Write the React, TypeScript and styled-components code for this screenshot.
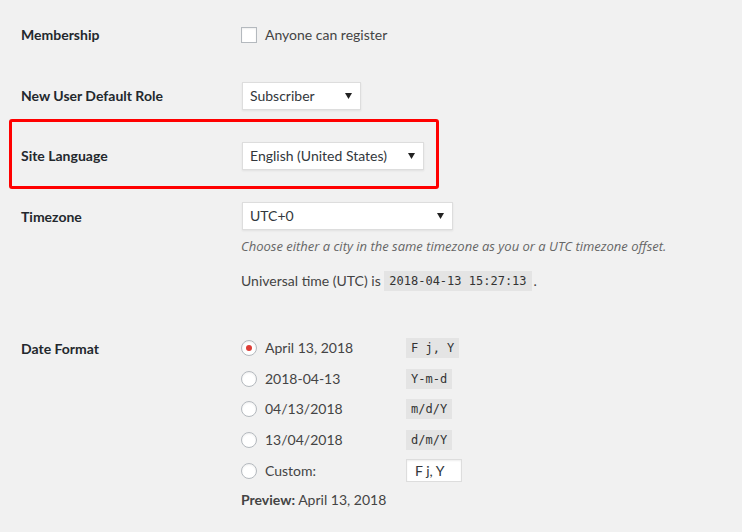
import styled, { createGlobalStyle } from 'styled-components';

const GlobalStyle = createGlobalStyle`
  body {
    margin: 0;
    background: #f1f1f1;
    font-family: "Lato", "Open Sans", sans-serif;
    font-size: 14px;
    color: #444;
  }
`;

const dateOptions = [
  { label: 'April 13, 2018', code: 'F j, Y', checked: true },
  { label: '2018-04-13', code: 'Y-m-d' },
  { label: '04/13/2018', code: 'm/d/Y' },
  { label: '13/04/2018', code: 'd/m/Y' },
];

const Caret = () => (
  <svg width="7" height="6" viewBox="0 0 7 6">
    <path d="M0 0h7L3.5 6z" fill="#222" />
  </svg>
);

const App = () => {
  return (
    <>
      <GlobalStyle />
      <Styled.Page>
        <Styled.Row $h={62}>
          <Styled.Label>Membership</Styled.Label>
          <Styled.Field>
            <Styled.Check>
              <Styled.Box />
              Anyone can register
            </Styled.Check>
          </Styled.Field>
        </Styled.Row>

        <Styled.Row $h={60}>
          <Styled.Label>New User Default Role</Styled.Label>
          <Styled.Field>
            <Styled.Select $w={119}>
              Subscriber
              <Caret />
            </Styled.Select>
          </Styled.Field>
        </Styled.Row>

        <Styled.Row $h={60}>
          <Styled.Highlight />
          <Styled.Label>Site Language</Styled.Label>
          <Styled.Field>
            <Styled.Select $w={182}>
              English (United States)
              <Caret />
            </Styled.Select>
          </Styled.Field>
        </Styled.Row>

        <Styled.TopRow>
          <Styled.Label $top={21}>Timezone</Styled.Label>
          <Styled.Field $top={16}>
            <Styled.Select $w={211}>
              UTC+0
              <Caret />
            </Styled.Select>
            <Styled.Description>
              Choose either a city in the same timezone as you or a UTC timezone offset.
            </Styled.Description>
            <Styled.TimeLine>
              Universal time (UTC) is <Styled.Code>2018-04-13 15:27:13</Styled.Code>.
            </Styled.TimeLine>
          </Styled.Field>
        </Styled.TopRow>

        <Styled.TopRow $gap={42}>
          <Styled.Label $top={6}>Date Format</Styled.Label>
          <Styled.Field>
            {dateOptions.map((o) => (
              <Styled.Option key={o.code}>
                <Styled.Radio $checked={o.checked} />
                <Styled.OptionText>{o.label}</Styled.OptionText>
                <Styled.Code>{o.code}</Styled.Code>
              </Styled.Option>
            ))}
            <Styled.Option $h={31}>
              <Styled.Radio />
              <Styled.OptionText>Custom:</Styled.OptionText>
              <Styled.Input>F j, Y</Styled.Input>
            </Styled.Option>
            <Styled.Preview>
              <strong>Preview:</strong> April 13, 2018
            </Styled.Preview>
          </Styled.Field>
        </Styled.TopRow>
      </Styled.Page>
    </>
  );
};

export default App;

const Styled = {
  Page: styled.div`
    padding: 4px 0 0 21px;
  `,
  Row: styled.div<{ $h: number }>`
    position: relative;
    display: flex;
    align-items: center;
    height: ${(p) => p.$h}px;
  `,
  TopRow: styled.div<{ $gap?: number }>`
    display: flex;
    align-items: flex-start;
    margin-top: ${(p) => p.$gap ?? 0}px;
  `,
  Highlight: styled.div`
    position: absolute;
    left: -12px;
    top: -7px;
    width: 430px;
    height: 70px;
    box-sizing: border-box;
    border: 3px solid #ff0000;
    border-radius: 3px;
    pointer-events: none;
  `,
  Label: styled.div<{ $top?: number }>`
    width: 220px;
    flex-shrink: 0;
    padding-top: ${(p) => p.$top ?? 0}px;
    line-height: 20px;
    font-weight: 700;
    color: #23282d;
  `,
  Field: styled.div<{ $top?: number }>`
    display: flex;
    flex-direction: column;
    align-items: flex-start;
    padding-top: ${(p) => p.$top ?? 0}px;
    line-height: 20px;
  `,
  Check: styled.label`
    display: flex;
    align-items: center;
    gap: 8px;
  `,
  Box: styled.span`
    width: 16px;
    height: 16px;
    box-sizing: border-box;
    border: 1px solid #b4b9be;
    background: #fff;
    box-shadow: inset 0 1px 2px rgba(0, 0, 0, 0.07);
  `,
  Select: styled.div<{ $w: number }>`
    display: flex;
    align-items: center;
    justify-content: space-between;
    box-sizing: border-box;
    width: ${(p) => p.$w}px;
    height: 28px;
    margin-left: 1px;
    padding: 0 8px 0 7px;
    border: 1px solid #ddd;
    background: #fff;
    box-shadow: 0 1px 2px rgba(0, 0, 0, 0.07);
    color: #32373c;
  `,
  Description: styled.p`
    margin: 6px 0 0;
    font-family: "Open Sans", sans-serif;
    font-size: 13px;
    font-style: italic;
    color: #666;
  `,
  TimeLine: styled.p`
    margin: 15px 0 0;
    display: flex;
    align-items: center;
    white-space: pre;
  `,
  Code: styled.code`
    padding: 0 5px;
    margin-right: 2px;
    line-height: 20px;
    background: #e4e4e4;
    font-family: "DejaVu Sans Mono", monospace;
    font-size: 12px;
    color: #333;
  `,
  Option: styled.div<{ $h?: number }>`
    display: flex;
    align-items: center;
    height: ${(p) => p.$h ?? 30.5}px;
  `,
  Radio: styled.span<{ $checked?: boolean }>`
    display: flex;
    align-items: center;
    justify-content: center;
    width: 16px;
    height: 16px;
    box-sizing: border-box;
    border: 1px solid #b4b9be;
    border-radius: 50%;
    background: #fff;
    box-shadow: inset 0 1px 2px rgba(0, 0, 0, 0.07);

    &::after {
      content: '';
      display: ${(p) => (p.$checked ? 'block' : 'none')};
      width: 6px;
      height: 6px;
      border-radius: 50%;
      background: #dd3d36;
    }
  `,
  OptionText: styled.span`
    width: 141px;
    padding-left: 8px;
  `,
  Input: styled.div`
    box-sizing: border-box;
    width: 56px;
    height: 23px;
    padding: 0 8px;
    line-height: 21px;
    border: 1px solid #ddd;
    background: #fff;
    box-shadow: inset 0 1px 2px rgba(0, 0, 0, 0.07);
    color: #32373c;
  `,
  Preview: styled.p`
    margin: 4px 0 0;
    strong {
      font-weight: 700;
    }
  `,
};
